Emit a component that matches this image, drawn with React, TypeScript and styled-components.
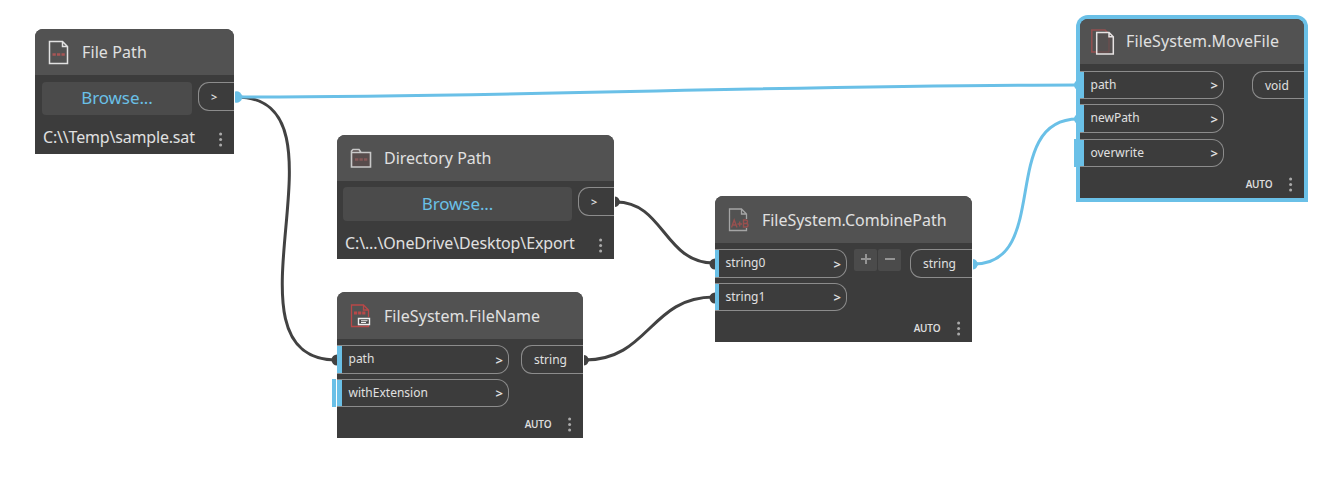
import React from "react";
import styled, { createGlobalStyle, css } from "styled-components";

const blue = "#6ac0e7";
const wire = "#424242";

const GlobalStyle = createGlobalStyle`
  body { margin: 0; background: #fff; overflow: hidden; }
  * { box-sizing: border-box; }
`;

const Canvas = styled.main`
  position: relative;
  width: 1340px;
  height: 488px;
  overflow: hidden;
  background: #fff;
  font-family: "Noto Sans", "Open Sans", sans-serif;
  color: #e0e0e0;
`;

const Wires = styled.svg`
  position: absolute;
  inset: 0;
  fill: none;
  stroke-width: 3;
`;

const NodeCard = styled.section<{ $x: number; $y: number; $w: number; $h: number; $selected?: boolean }>`
  position: absolute;
  left: ${(p) => p.$x}px;
  top: ${(p) => p.$y}px;
  width: ${(p) => p.$w}px;
  height: ${(p) => p.$h}px;
  display: flex;
  flex-direction: column;
  background: #3c3c3c;
  border-radius: 8px 8px 0 0;
  ${(p) => p.$selected && css`box-shadow: 0 0 0 4px ${blue};`}
`;

const Header = styled.header<{ $h: number; $pad?: number }>`
  flex: none;
  height: ${(p) => p.$h}px;
  display: flex;
  align-items: center;
  gap: 10px;
  padding-left: ${(p) => p.$pad ?? 12}px;
  background: #525252;
  border-radius: 8px 8px 0 0;
  svg { flex: none; fill: none; }
`;

const Title = styled.h2<{ $track?: number; $lift?: number }>`
  margin: 0 0 ${(p) => p.$lift ?? 0}px;
  font-size: 16px;
  font-weight: 400;
  line-height: 22px;
  white-space: nowrap;
  letter-spacing: ${(p) => p.$track ?? 0}px;
`;

const Body = styled.div<{ $top?: number; $left?: number }>`
  display: flex;
  justify-content: space-between;
  align-items: flex-start;
  padding: ${(p) => p.$top ?? 6}px 0 0 ${(p) => p.$left ?? 0}px;
`;

const Browse = styled.button<{ $w: number; $h: number }>`
  width: ${(p) => p.$w}px;
  height: ${(p) => p.$h}px;
  padding: 0 0 1px;
  border: 0;
  border-radius: 4px;
  background: #4b4b4b;
  color: ${blue};
  font: 400 17px/30px "Noto Sans", sans-serif;
  letter-spacing: -0.1px;
`;

const Output = styled.div<{ $w: number; $h?: number }>`
  width: ${(p) => p.$w}px;
  height: ${(p) => p.$h ?? 29}px;
  display: flex;
  align-items: center;
  padding-left: 12px;
  border: 1px solid #8c8c8c;
  border-right: 0;
  border-radius: 11px 0 0 11px;
  font-size: 12px;
`;

const Inputs = styled.div`
  display: flex;
  flex-direction: column;
`;

const Input = styled.div<{ $w: number; $h: number; $gap?: number; $mark: number }>`
  width: ${(p) => p.$w}px;
  height: ${(p) => p.$h}px;
  margin-top: ${(p) => p.$gap ?? 0}px;
  display: flex;
  align-items: center;
  justify-content: space-between;
  padding: 0 5px 2px ${(p) => p.$mark + 6.5}px;
  border: solid #8c8c8c;
  border-width: 1px 1px 1px 0;
  border-radius: 0 12px 12px 0;
  box-shadow: inset ${(p) => p.$mark}px 0 ${blue};
  font-size: 12px;
`;

const DefaultMark = styled.i<{ $x: number; $y: number; $w: number }>`
  position: absolute;
  left: ${(p) => p.$x}px;
  top: ${(p) => p.$y}px;
  width: ${(p) => p.$w}px;
  height: 28px;
  background: ${blue};
`;

const Caret = styled.span`
  font-size: 13px;
  line-height: 14px;
  padding-top: 2px;
  font-weight: 600;
`;

const SmallCaret = styled.span`
  font-size: 11px;
  line-height: 12px;
  font-weight: 600;
`;

const PathRow = styled.div`
  display: flex;
  justify-content: space-between;
  align-items: flex-start;
  padding: 11px 11px 0 8px;
  line-height: 22px;
  svg { margin-top: 6px; }
`;

const PathText = styled.span<{ $track: number }>`
  font-size: 16px;
  white-space: nowrap;
  letter-spacing: ${(p) => p.$track}px;
`;

const Footer = styled.footer`
  margin-top: auto;
  height: 27px;
  display: flex;
  align-items: center;
  justify-content: flex-end;
  gap: 17px;
  padding: 0 10.600px 1px 0;
  font-family: "Open Sans", sans-serif;
  font-size: 10px;
  font-weight: 600;
  letter-spacing: -0.2px;
`;

const Stepper = styled.div`
  display: flex;
  gap: 1px;
  margin: 0 9px 0 7px;
`;

const Step = styled.span`
  width: 23px;
  height: 22px;
  display: grid;
  place-items: center;
  padding-bottom: 2px;
  background: #4b4b4b;
  border-radius: 2px;
  svg { stroke: #949494; stroke-width: 2; }
`;

const Dots = () => (
  <svg width="4" height="15" viewBox="0 0 4 15" fill="#ababab">
    <circle cx="1.6" cy="2" r="1.5" />
    <circle cx="1.6" cy="7.5" r="1.5" />
    <circle cx="1.6" cy="13" r="1.5" />
  </svg>
);

const FileIcon = () => (
  <svg width="25" height="26" viewBox="0 0 25 26">
    <path d="M2.5 2.500H15.500L20.500 7.500V24.500H2.500Z M15.500 2.500V7.500H20.500" stroke="#e2e2e2" strokeWidth="1.500" />
    <path d="M5.500 15.500H18" stroke="#a85555" strokeWidth="2.400" strokeDasharray="3.300 1.200" />
  </svg>
);

const FolderIcon = () => (
  <svg width="25" height="26" viewBox="0 0 25 26">
    <path d="M2.500 22V6L4 4.500H10L12 7.500H21.500V22Z" fill="#574c4c" />
    <path d="M2.500 22V6L4 4.500H10L12 7.500H21.500V22Z M3 7.500H12" stroke="#c8c8c8" strokeWidth="1.600" />
    <path d="M6 14.500H18.500" stroke="#855757" strokeWidth="2.400" strokeDasharray="3.300 1.200" />
  </svg>
);

const FileNameIcon = () => (
  <svg width="25" height="26" viewBox="0 0 25 26">
    <path d="M19.500 14V7L14.500 2H2.500V23.500H19.500V22 M14.500 2V7H19.500" stroke="#b84848" strokeWidth="1.300" />
    <path d="M5 10H17" stroke="#b84848" strokeWidth="3" strokeDasharray="3.200 .9" />
    <path d="M9.500 15.500H20.500V21.500H9.500Z" fill="#444" stroke="#eee" strokeWidth="1.400" />
    <path d="M12 17.700H18.500 M12 19.500H17" stroke="#eee" strokeWidth="1.100" />
  </svg>
);

const CombineIcon = () => (
  <svg width="25" height="26" viewBox="0 0 25 26">
    <path d="M19.500 21V23.500H2.500V2H14.500L19.500 7V12 M14.500 2V7H19.500" stroke="#a5a5a5" strokeWidth="1.300" />
    <path d="M4.500 20.500L7.200 13L10 20.500M5.500 18H9M10.500 17H15M12.700 14.500V19.500M16.500 13V20H19Q21 20 21 18.200T19 16.500H16.500H18.500Q20.500 16.500 20.500 14.700T18.500 13Z" stroke="#98504f" strokeWidth="1.400" />
  </svg>
);

const MoveIcon = () => (
  <svg width="25" height="28" viewBox="0 0 25 28">
    <path d="M.8 2H14L18 6V24H.8Z" stroke="#945050" strokeWidth="1.500" />
    <path d="M5.700 4.500H18L22.300 8.800V26H5.700Z" fill="#545050" />
    <path d="M6 24H18V8" stroke="#744c4c" />
    <path d="M5.700 4.500H18L22.300 8.800V26H5.700Z M18 4.500V8.800H22.300" stroke="#e6e2e2" strokeWidth="1.500" />
  </svg>
);

export default function App() {
  return (
    <Canvas>
      <GlobalStyle />
      <Wires width="1340" height="488">
        <g stroke={wire}>
          <path d="M236 97C360 97 211 360 337 360" />
          <path d="M616 202C664 202 664 263 714 263" />
          <path d="M585 360C649 360 650 297 714 297" />
        </g>
        <g stroke={blue}>
          <path d="M236 97C516 97 797 85 1078 85" />
          <path d="M974 264C1052 264 998 119 1078 119" />
        </g>
        <g fill={wire} stroke="none">
          <path d="M615 196.500A5.300 5.300 0 0 1 615 207Z" />
          <path d="M584 355A5.300 5.300 0 0 1 584 365.500Z" />
          <circle cx="337" cy="360" r="5.500" />
          <circle cx="715" cy="264" r="5.500" />
          <circle cx="715" cy="298" r="5.500" />
        </g>
        <g fill={blue} stroke="none">
          <path d="M235 91.500A5.700 5.700 0 1 1 235 102.500Z" />
          <path d="M973 259A5.300 5.300 0 0 1 973 269.500Z" />
          <circle cx="1079" cy="85" r="5" />
          <circle cx="1079" cy="119" r="5" />
        </g>
        <path d="M615 202H620M584 360H589" stroke={wire} />
        <path d="M973 264H978" stroke={blue} />
      </Wires>

      <NodeCard $x={35} $y={29} $w={199} $h={125}>
        <Header $h={46}><FileIcon /><Title $track={0.1}>File Path</Title></Header>
        <Body $top={7} $left={7}>
          <Browse $w={150} $h={33}>Browse...</Browse>
          <Output $w={36}><SmallCaret>&gt;</SmallCaret></Output>
        </Body>
        <PathRow><PathText $track={-0.18}>C:\\Temp\sample.sat</PathText><Dots /></PathRow>
      </NodeCard>

      <NodeCard $x={337} $y={135} $w={277} $h={124}>
        <Header $h={46}><FolderIcon /><Title>Directory Path</Title></Header>
        <Body $left={6}>
          <Browse $w={229} $h={34}>Browse...</Browse>
          <Output $w={36}><SmallCaret>&gt;</SmallCaret></Output>
        </Body>
        <PathRow><PathText $track={-0.13}>C:\...\OneDrive\Desktop\Export</PathText><Dots /></PathRow>
      </NodeCard>

      <NodeCard $x={337} $y={292} $w={246} $h={146}>
        <Header $h={47}><FileNameIcon /><Title $track={0.06}>FileSystem.FileName</Title></Header>
        <Body>
          <Inputs>
            <Input $w={172} $h={29} $mark={5}>path<Caret>&gt;</Caret></Input>
            <Input $w={172} $h={28} $gap={5} $mark={5}>withExtension<Caret>&gt;</Caret></Input>
          </Inputs>
          <Output $w={62}>string</Output>
        </Body>
        <DefaultMark $x={-5} $y={87} $w={4} />
        <Footer>AUTO<Dots /></Footer>
      </NodeCard>

      <NodeCard $x={715} $y={196} $w={257} $h={146}>
        <Header $h={47}><CombineIcon /><Title $track={-0.04}>FileSystem.CombinePath</Title></Header>
        <Body>
          <Inputs>
            <Input $w={132} $h={29} $mark={4}>string0<Caret>&gt;</Caret></Input>
            <Input $w={132} $h={28} $gap={5} $mark={4}>string1<Caret>&gt;</Caret></Input>
          </Inputs>
          <Stepper>
            <Step><svg width="12" height="12"><path d="M6 1V11M1 6H11" /></svg></Step>
            <Step><svg width="12" height="12"><path d="M1 6H11" /></svg></Step>
          </Stepper>
          <Output $w={62}>string</Output>
        </Body>
        <Footer>AUTO<Dots /></Footer>
      </NodeCard>

      <NodeCard $x={1080} $y={19} $w={224} $h={179} $selected>
        <Header $h={45} $pad={11}><MoveIcon /><Title $track={0.12} $lift={2}>FileSystem.MoveFile</Title></Header>
        <Body $top={7}>
          <Inputs>
            <Input $w={144} $h={28} $mark={4}>path<Caret>&gt;</Caret></Input>
            <Input $w={144} $h={29} $gap={5} $mark={4}>newPath<Caret>&gt;</Caret></Input>
            <Input $w={144} $h={28} $gap={6} $mark={4}>overwrite<Caret>&gt;</Caret></Input>
          </Inputs>
          <Output $w={52} $h={28}>void</Output>
        </Body>
        <DefaultMark $x={-6} $y={120} $w={6} />
        <Footer>AUTO<Dots /></Footer>
      </NodeCard>
    </Canvas>
  );
}
